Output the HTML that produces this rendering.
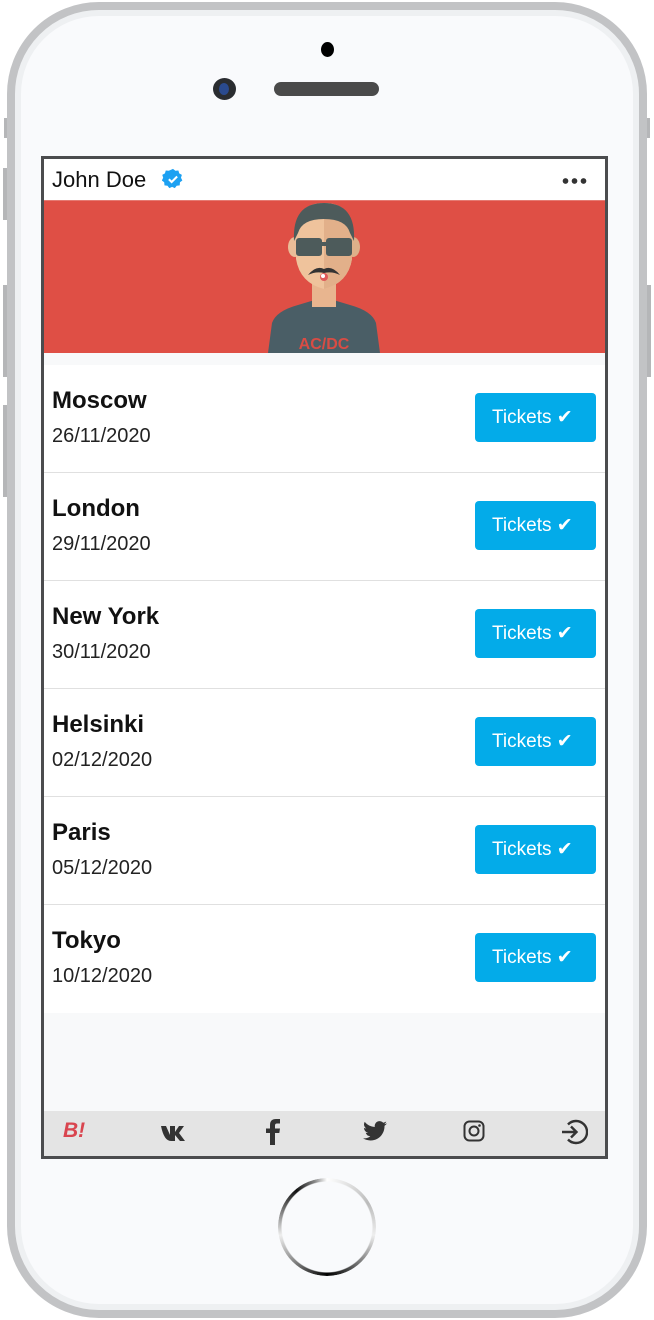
<!DOCTYPE html>
<html><head><meta charset="utf-8"><style>
*{margin:0;padding:0;box-sizing:border-box}
body{width:654px;height:1320px;background:#fff;position:relative;overflow:hidden;font-family:"Liberation Sans",sans-serif}
.phone{position:absolute;left:7px;top:2px;width:640px;height:1316px;border:8px solid #c2c3c5;border-radius:92px;background:#f9fafc;box-shadow:inset 0 0 0 6px #eef0f2}
.side{position:absolute;background:#b5b6b8}
.screen{position:absolute;left:41px;top:156px;width:567px;height:1003px;border:3px solid #4b4c4e;background:#f8f9fa;overflow:hidden}
.hdr{height:41px;background:#fff;position:relative}
.hdr .name{position:absolute;left:8px;top:8px;font-size:22px;color:#111}
.banner{height:153px;background:#df4f45;position:relative;border-top:1px solid #e57a72}
.list{position:absolute;top:206px;left:0;right:0;background:#fff}
.row{height:108px;border-bottom:1px solid #e0e0e0;position:relative}
.row:last-child{border-bottom:none}
.city{position:absolute;left:8px;top:22px;font-size:24px;font-weight:bold;color:#111}
.date{position:absolute;left:8px;top:60px;font-size:20px;color:#222}
.btn{position:absolute;left:431px;top:28px;width:121px;height:49px;background:#03abe9;border-radius:4px;color:#fff;font-size:19px;line-height:49px;padding-left:17px}
.foot{position:absolute;left:0;right:0;top:952px;height:45px;background:#e4e4e4}
.ic{position:absolute;top:10px}
</style></head><body>
<div class="side" style="left:4px;top:118px;width:4px;height:20px"></div>
<div class="side" style="left:646px;top:118px;width:4px;height:20px"></div>
<div class="side" style="left:3px;top:168px;width:5px;height:52px"></div>
<div class="side" style="left:3px;top:285px;width:5px;height:92px"></div>
<div class="side" style="left:3px;top:405px;width:5px;height:92px"></div>
<div class="side" style="left:646px;top:285px;width:5px;height:92px"></div>
<div class="phone"></div>
<div style="position:absolute;left:321px;top:42px;width:13px;height:15px;border-radius:50%;background:#000"></div>
<div style="position:absolute;left:213px;top:78px;width:23px;height:22px;border-radius:50%;background:#2a2c30"><div style="position:absolute;left:6px;top:5px;width:10px;height:12px;border-radius:50%;background:#2a4a8f"></div></div>
<div style="position:absolute;left:274px;top:82px;width:105px;height:14px;border-radius:7px;background:#4a4a4a"></div>
<div style="position:absolute;left:278px;top:1178px;width:98px;height:98px;border-radius:50%;background:conic-gradient(#fff 0deg,#bbb 60deg,#eee 100deg,#333 160deg,#000 180deg,#999 230deg,#eee 260deg,#555 300deg,#111 320deg,#888 345deg,#fff 360deg);-webkit-mask:radial-gradient(circle,transparent 45px,#000 46px);mask:radial-gradient(circle,transparent 45px,#000 46px)"></div>
<div class="screen">
 <div class="hdr"><span class="name">John Doe</span>
  <svg style="position:absolute;left:118px;top:9px" width="22" height="22" viewBox="0 0 24 24"><path fill="#1da1f2" d="M12 1l2.6 2 3.3-.3.9 3.2 2.9 1.6-1 3.1 1.5 3-2.6 2-.3 3.3-3.3.4-2 2.7-3-1.4-3 1.4-2-2.7-3.3-.4-.3-3.3-2.6-2 1.5-3-1-3.1 2.9-1.6.9-3.2 3.3.3z"/><path d="M7.5 12.3l3 3 6-6" stroke="#fff" stroke-width="2.2" fill="none"/></svg>
  <div style="position:absolute;right:18px;top:19px;width:26px;height:6px;background:radial-gradient(circle,#333 2.6px,transparent 3px) 0 0/9px 6px"></div>
 </div>
 <div class="banner">
  <svg style="position:absolute;left:224px;top:2px" width="112" height="150" viewBox="0 0 112 150">
   <path d="M0 150 L4 120 Q8 108 30 102 L50 96 L62 96 L82 102 Q104 108 108 120 L112 150Z" fill="#4a5e66"/>
   <rect x="44" y="76" width="24" height="28" fill="#e8b58f"/>
   <ellipse cx="27" cy="44" rx="7" ry="10" fill="#eabd98"/><ellipse cx="85" cy="44" rx="7" ry="10" fill="#ddb08a"/>
   <path d="M28 30 Q28 0 56 0 Q84 0 84 30 L84 56 Q80 80 56 86 Q32 80 28 56Z" fill="#efc39c"/>
   <path d="M56 0 Q84 0 84 30 L84 56 Q80 80 56 86Z" fill="#e2b08a"/>
   <path d="M26 38 Q24 0 56 0 Q88 0 86 38 L82 30 Q78 16 56 16 Q34 16 30 30Z" fill="#4d5b5b"/>
   <rect x="28" y="35" width="26" height="18" rx="3" fill="#4d5b5b"/><rect x="58" y="35" width="26" height="18" rx="3" fill="#4d5b5b"/><rect x="52" y="39" width="8" height="4" fill="#4d5b5b"/>
   <path d="M40 72 Q48 62 56 66 Q64 62 72 72 Q64 68 56 70 Q48 68 40 72Z" fill="#333"/>
   <circle cx="56" cy="74" r="4" fill="#e05a5a"/><circle cx="55" cy="73" r="2" fill="#fff"/>
   <text x="56" y="146" font-family="Liberation Sans" font-weight="bold" font-size="16" fill="#d94c44" text-anchor="middle">AC/DC</text>
  </svg>
 </div>
 <div class="list">
  <div class="row"><div class="city">Moscow</div><div class="date">26/11/2020</div><div class="btn">Tickets ✔</div></div>
  <div class="row"><div class="city">London</div><div class="date">29/11/2020</div><div class="btn">Tickets ✔</div></div>
  <div class="row"><div class="city">New York</div><div class="date">30/11/2020</div><div class="btn">Tickets ✔</div></div>
  <div class="row"><div class="city">Helsinki</div><div class="date">02/12/2020</div><div class="btn">Tickets ✔</div></div>
  <div class="row"><div class="city">Paris</div><div class="date">05/12/2020</div><div class="btn">Tickets ✔</div></div>
  <div class="row"><div class="city">Tokyo</div><div class="date">10/12/2020</div><div class="btn">Tickets ✔</div></div>
 </div>
 <div class="foot">
  <span class="ic" style="left:19px;top:8px;color:#d9454f;font-weight:bold;font-style:italic;font-size:21px">B!</span>
  <svg class="ic" style="left:117px;top:14px" width="26" height="16" viewBox="0 0 26 16"><path fill="#333" d="M0 1h5l4 9V1h5v6l4-6h5l-5 7 6 8h-5l-5-6v6h-4Q3 16 0 1z"/></svg>
  <svg class="ic" style="left:222px;top:8px" width="14" height="26" viewBox="0 0 14 26"><path fill="#333" d="M4 26V14H0V9.5h4V6Q4 0 10 0h4v4.5h-3Q9 4.5 9 6.5v3h5l-.7 4.5H9V26z"/></svg>
  <svg class="ic" style="left:319px;top:10px" width="24" height="20" viewBox="0 0 24 20"><path fill="#333" d="M24 2.4a10 10 0 0 1-2.8.8A5 5 0 0 0 23.3.5a10 10 0 0 1-3.1 1.2A4.9 4.9 0 0 0 11.8 6 14 14 0 0 1 1.7.9a4.9 4.9 0 0 0 1.5 6.6A5 5 0 0 1 1 6.9a4.9 4.9 0 0 0 3.9 4.8 5 5 0 0 1-2.2.1 4.9 4.9 0 0 0 4.6 3.4A10 10 0 0 1 0 17.3 14 14 0 0 0 7.5 19.5c9 0 14-7.5 14-14v-.6A10 10 0 0 0 24 2.4z"/></svg>
  <svg class="ic" style="left:419px;top:9px" width="22" height="22" viewBox="0 0 22 22"><rect x="1.5" y="1.5" width="19" height="19" rx="5" fill="none" stroke="#333" stroke-width="2"/><circle cx="11" cy="11" r="4.5" fill="none" stroke="#333" stroke-width="2"/><circle cx="16.5" cy="5.5" r="1.3" fill="#333"/></svg>
  <svg class="ic" style="left:516px;top:7px" width="28" height="28" viewBox="0 0 28 28"><path d="M8 6.5A11 11 0 1 1 8 21.5" fill="none" stroke="#333" stroke-width="2.4"/><path d="M2 14h14M11 8.5l5.5 5.5-5.5 5.5" fill="none" stroke="#333" stroke-width="2.4"/></svg>
 </div>
</div>
</body></html>
